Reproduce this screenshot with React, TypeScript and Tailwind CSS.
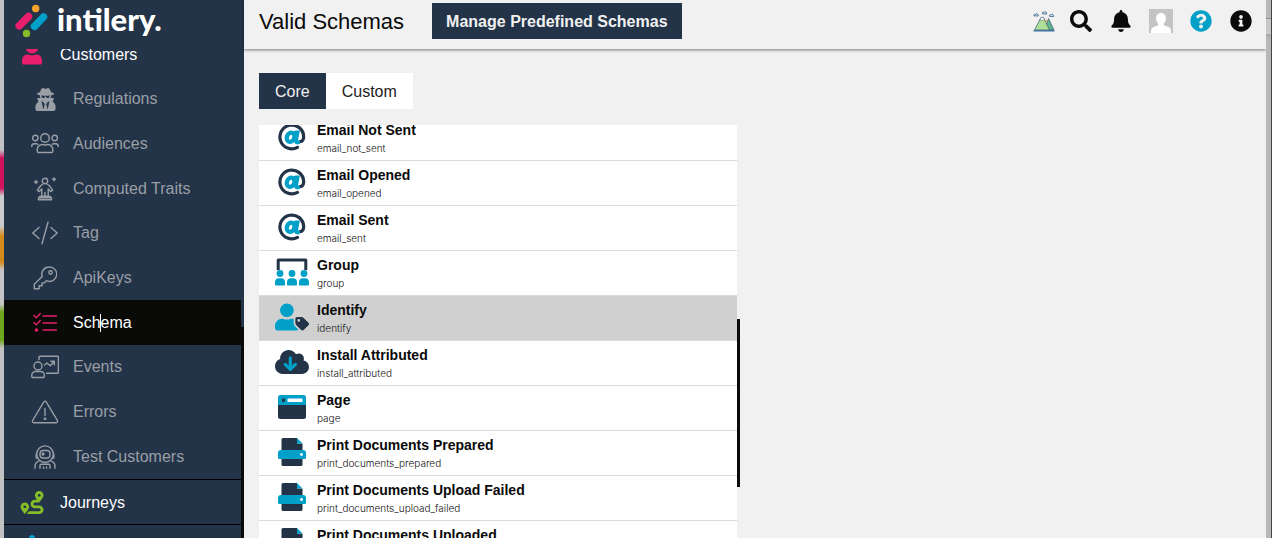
import type { ReactNode } from "react";
import {
  FaBell,
  FaInfoCircle,
  FaQuestionCircle,
  FaRoute,
  FaSearch,
  FaUserSecret,
} from "react-icons/fa";

function LineIcon({
  children,
  wide,
}: {
  children: ReactNode;
  wide?: boolean;
}) {
  return (
    <svg
      viewBox={wide ? "0 0 28 24" : "0 0 24 24"}
      className={wide ? "w-7 h-6" : "w-6 h-6"}
      fill="none"
      stroke="currentColor"
      strokeWidth={1.4}
      strokeLinecap="round"
      strokeLinejoin="round"
    >
      {children}
    </svg>
  );
}

const navIcons = {
  audiences: (
    <LineIcon wide>
      <circle cx="14" cy="6" r="4.3" />
      <circle cx="4.3" cy="6" r="2.7" />
      <circle cx="23.7" cy="6" r="2.7" />
      <path d="M6.200 19.300v-1.800a5 5 0 0 1 5-5c1 0 1.600.5 2.800.5s1.800-.5 2.800-.5a5 5 0 0 1 5 5v1.800a1.200 1.200 0 0 1-1.200 1.200H7.400a1.200 1.200 0 0 1-1.200-1.200z" />
      <path d="M.7 14.500c0-1.600 1.200-2.700 2.700-2.700h1.800c.6 0 1.200.2 1.600.5M27.300 14.500c0-1.600-1.200-2.700-2.700-2.700h-1.800c-.6 0-1.200.2-1.600.5" />
    </LineIcon>
  ),
  traits: (
    <LineIcon>
      <circle cx="12" cy="4" r="2.700" />
      <path d="M9.500 7.500 7.800 8.500 4.400 13.200l1.800 1.400 2.600-2.700v7.400h6.400v-7.400l2.600 2.700 1.800-1.400-3.400-4.700-1.700-1M12 15.500v3.800M6.500 19.500h11v1.300h-11zM5.500 22.800v-2h13v2zM3 3.500v3M1.500 5h3M21 .8v3M19.500 2.300h3" />
    </LineIcon>
  ),
  tag: (
    <LineIcon wide>
      <path d="M8 6.500 1.800 12 8 17.500M20 6.500l6.200 5.500-6.200 5.500M17 1.200 11 22.800" />
    </LineIcon>
  ),
  key: (
    <LineIcon>
      <circle cx="17.500" cy="6.500" r="1.700" />
      <path d="M16 1a7.200 7.200 0 0 0-6.800 9.500L1.300 18.300v4.400h4.900v-2.900h2.900v-2.900h2.400l2-2.200A7.200 7.200 0 1 0 16 1z" />
    </LineIcon>
  ),
  schema: (
    <LineIcon>
      <path d="m1 4.500 2.300 2.300L7.300 2.500M1 11.500l2.300 2.300 4-4.300M10 5h13.500M10 12h13.500M10 19h13.500" />
      <circle cx="3.500" cy="19" r="1" fill="currentColor" />
    </LineIcon>
  ),
  events: (
    <LineIcon wide>
      <path d="M8 4.500V2.300a1 1 0 0 1 1-1h17.400a1 1 0 0 1 1 1v15a1 1 0 0 1-1 1H15.500M13.500 10l2.500-2 3.300 2.800 4-4.500M19.800 6.300h3.500v3.600" />
      <circle cx="7" cy="11" r="4" />
      <path d="M.8 21.500v-1.200c0-2.200 1.800-3.800 3.900-3.800h4.800c2.100 0 3.900 1.600 3.900 3.800v1.200a1 1 0 0 1-1 1H1.800a1 1 0 0 1-1-1z" />
    </LineIcon>
  ),
  errors: (
    <LineIcon wide>
      <path d="M12.800 1.800 1.600 20.500c-.6 1 .1 2.200 1.200 2.200h22.400c1.100 0 1.800-1.200 1.200-2.200L15.200 1.800c-.5-.9-1.900-.9-2.400 0zM14 8.500v7" />
      <circle cx="14" cy="18.800" r=".7" fill="currentColor" />
    </LineIcon>
  ),
  testers: (
    <LineIcon>
      <path d="M3.500 9h-.3v4h1.200M20.500 9h.3v4h-1.200" />
      <circle cx="12" cy="9.200" r="8.300" />
      <rect x="7" y="5.500" width="10" height="7.500" rx="3" />
      <path d="M10 7.800v2.400M8.800 9h2.400M2 23.300v-1.800c0-2.700 1.600-4.600 3.800-5.300M22 23.300v-1.800c0-2.700-1.600-4.600-3.800-5.300M7 23.300v-2.800c0-.7.500-1.200 1.200-1.200h7.600c.7 0 1.200.5 1.200 1.200v2.800M10.500 22v1.300M13.500 22v1.300" />
    </LineIcon>
  ),
};

const links = [
  { name: "Regulations", icon: <FaUserSecret size={23} /> },
  { name: "Audiences", icon: navIcons.audiences },
  { name: "Computed Traits", icon: navIcons.traits },
  { name: "Tag", icon: navIcons.tag },
  { name: "ApiKeys", icon: navIcons.key },
  { name: "Schema", icon: navIcons.schema, active: true },
  { name: "Events", icon: navIcons.events },
  { name: "Errors", icon: navIcons.errors },
  { name: "Test Customers", icon: navIcons.testers },
];

function AtIcon() {
  return (
    <svg viewBox="0 0 28 28" className="w-7 h-7" fill="none">
      <path
        d="M19.500 24.400A11.900 11.900 0 1 1 25.700 13.500c0 3.300-1.500 5-3.700 5.100"
        stroke="#233348"
        strokeWidth="3.200"
        strokeLinecap="round"
      />
      <path
        d="M17.500 9.300h2.200l-1.700 8.800c-.2 1.200.6 1.600 2.400 1.300"
        stroke="#00a0c8"
        strokeWidth="3.600"
        strokeLinecap="round"
      />
      <ellipse
        cx="12.600"
        cy="14.300"
        rx="3.700"
        ry="4.700"
        transform="rotate(24 12.600 14.300)"
        stroke="#00a0c8"
        strokeWidth="4.300"
      />
    </svg>
  );
}

function GroupIcon() {
  return (
    <svg viewBox="0 0 34 28" className="w-[34px] h-7">
      <path d="M3.200 12V2h27.600v10" fill="none" stroke="#233348" strokeWidth="3" strokeLinejoin="round" />
      <g fill="#00a0c8">
        <circle cx="5" cy="15.500" r="3.400" />
        <circle cx="17" cy="15.500" r="3.400" />
        <circle cx="29" cy="15.500" r="3.400" />
        <path d="M0 26.500v-2.200a4 4 0 0 1 4-4h2a4 4 0 0 1 4 4v2.200a.9.900 0 0 1-.9.900H.9a.9.900 0 0 1-.9-.9zM12 26.500v-2.200a4 4 0 0 1 4-4h2a4 4 0 0 1 4 4v2.200a.9.900 0 0 1-.9.900h-8.200a.9.900 0 0 1-.9-.9zM24 26.500v-2.200a4 4 0 0 1 4-4h2a4 4 0 0 1 4 4v2.200a.9.900 0 0 1-.9.900h-8.200a.9.900 0 0 1-.9-.9z" />
      </g>
    </svg>
  );
}

function IdentifyIcon() {
  return (
    <svg viewBox="0 0 640 512" className="w-[34px] h-7">
      <path
        d="M224 256c70.700 0 128-57.300 128-128S294.700 0 224 0 96 57.300 96 128s57.300 128 128 128zm127.800 111.200V294c-12.200-3.600-24.900-6.200-38.200-6.200h-16.700c-22.200 10.200-46.900 16-72.900 16s-50.600-5.800-72.900-16h-16.700C60.200 287.900 0 348.100 0 422.300v41.600c0 26.500 21.500 48 48 48h352c15.500 0 29.100-7.500 37.900-18.900l-58-58c-18.100-18.100-28.100-42.200-28.100-67.800z"
        fill="#00a0c8"
      />
      <path
        d="M630.600 364.900l-90.300-90.200c-12-12-28.300-18.700-45.300-18.700h-79.300c-17.700 0-32 14.300-32 32v79.200c0 17 6.700 33.200 18.700 45.200l90.300 90.200c12.500 12.500 32.800 12.500 45.300 0l92.500-92.500c12.600-12.500 12.600-32.700.1-45.200zm-182.800-21c-13.300 0-24-10.700-24-24s10.700-24 24-24 24 10.700 24 24c0 13.200-10.700 24-24 24z"
        fill="#233348"
      />
    </svg>
  );
}

function CloudIcon() {
  return (
    <svg viewBox="0 0 640 512" className="w-[34px] h-7">
      <path
        d="M537.600 226.600c4.100-10.700 6.400-22.400 6.400-34.600 0-53-43-96-96-96-19.700 0-38.100 6-53.300 16.200C367 64.200 315.300 32 256 32c-88.400 0-160 71.600-160 160 0 2.700.1 5.400.2 8.100C40.200 219.800 0 273.200 0 336c0 79.500 64.500 144 144 144h368c70.700 0 128-57.300 128-128 0-61.900-44-113.600-102.400-125.400z"
        fill="#233348"
      />
      <path
        d="M288 178v208M192 300l96 96 96-96"
        fill="none"
        stroke="#00a0c8"
        strokeWidth="60"
        strokeLinecap="round"
        strokeLinejoin="round"
      />
    </svg>
  );
}

function PageIcon() {
  return (
    <svg viewBox="0 0 28 24" className="w-7 h-6">
      <path d="M0 10h28v11.500a2.500 2.500 0 0 1-2.500 2.500h-23A2.500 2.500 0 0 1 0 21.500z" fill="#233348" />
      <path d="M2.500 0h23A2.500 2.500 0 0 1 28 2.500V10H0V2.500A2.500 2.500 0 0 1 2.500 0z" fill="#00a0c8" />
      <rect x="4" y="3.500" width="3" height="3.500" rx=".5" fill="#233348" />
      <rect x="9.500" y="3.500" width="15" height="3.500" rx=".5" fill="#fff" />
    </svg>
  );
}

function PrintIcon() {
  return (
    <svg viewBox="0 0 28 28" className="w-7 h-7">
      <path d="M3.500 12.500V1.500A1.500 1.500 0 0 1 5 0h14v5.500h5.500v7z" fill="#233348" />
      <path d="M19 0l5.500 5.500H19z" fill="#00a0c8" />
      <path d="M3.500 20h21v6.500A1.500 1.500 0 0 1 23 28H5a1.500 1.500 0 0 1-1.500-1.500z" fill="#233348" />
      <path d="M3 12h22a3 3 0 0 1 3 3v5a1 1 0 0 1-1 1H1a1 1 0 0 1-1-1v-5a3 3 0 0 1 3-3z" fill="#00a0c8" />
      <circle cx="23.500" cy="16.500" r="1.400" fill="#fff" />
    </svg>
  );
}

const schemas = [
  { title: "Email Not Sent", key: "email_not_sent", icon: <AtIcon /> },
  { title: "Email Opened", key: "email_opened", icon: <AtIcon /> },
  { title: "Email Sent", key: "email_sent", icon: <AtIcon /> },
  { title: "Group", key: "group", icon: <GroupIcon /> },
  { title: "Identify", key: "identify", icon: <IdentifyIcon />, selected: true },
  { title: "Install Attributed", key: "install_attributed", icon: <CloudIcon /> },
  { title: "Page", key: "page", icon: <PageIcon /> },
  { title: "Print Documents Prepared", key: "print_documents_prepared", icon: <PrintIcon /> },
  { title: "Print Documents Upload Failed", key: "print_documents_upload_failed", icon: <PrintIcon /> },
  { title: "Print Documents Uploaded", key: "print_documents_uploaded", icon: <PrintIcon /> },
];

function Logo() {
  return (
    <a href="#" className="flex items-center gap-2 pl-[11px] pb-[7px] h-[49px] shrink-0 text-white">
      <svg viewBox="0 0 34 34" className="w-[34px] h-[34px]" strokeLinecap="round" strokeWidth="7.500">
        <path d="M4.200 21.800 13.500 12.500" stroke="#e91e6c" />
        <path d="M19.500 22.300 28.500 13" stroke="#00a0c8" />
        <circle cx="20.700" cy="4.500" r="3.700" fill="#f9a12b" />
        <circle cx="11.500" cy="29.500" r="3.700" fill="#84bd27" />
      </svg>
      <span className="font-[Lato,sans-serif] font-black text-[31px] leading-10 pb-1">intilery.</span>
    </a>
  );
}

function Sidebar() {
  return (
    <aside className="w-60 shrink-0 flex flex-col h-full bg-[#233348] text-base">
      <Logo />
      <div className="flex flex-1 min-h-0">
        <nav className="flex-1 overflow-hidden">
          <a href="#" className="-mt-4 flex items-center h-[43px] pl-4 text-white">
            <span className="w-6 flex justify-center mr-4 pb-1">
              <svg viewBox="0 0 20 24" className="w-5 h-6" fill="#e91e6c">
                <circle cx="10" cy="6" r="6.500" />
                <path d="M0 22v-2.500c0-3.600 2.500-6 5.500-6 1.500 0 2.500 1 4.500 1s3-1 4.500-1c3 0 5.500 2.400 5.500 6V22a1.500 1.500 0 0 1-1.500 1.500h-17A1.500 1.500 0 0 1 0 22z" />
              </svg>
            </span>
            Customers
          </a>
          <ul className="flex flex-col h-[403px] pt-px">
            {links.map((link) => (
              <li key={link.name} className="flex-1 flex">
                <a
                  href="#"
                  className={`flex-1 flex items-center pl-[26px] ${
                    link.active ? "bg-[#0a0a09] text-white" : "text-[#9a9fa6]"
                  }`}
                >
                  <span
                    className={`w-[30px] mr-[13px] flex justify-center ${
                      link.active ? "text-[#e91e6c]" : ""
                    }`}
                  >
                    {link.icon}
                  </span>
                  <span className="relative">
                    {link.name}
                    {link.active && (
                      <span className="absolute left-[27px] top-[3px] w-px h-[18px] bg-white" />
                    )}
                  </span>
                </a>
              </li>
            ))}
          </ul>
          <a href="#" className="flex items-center h-[45px] pt-0.5 pl-4 border-t border-black text-white">
            <FaRoute size={23} color="#84bd27" className="mr-4 mb-0.5 w-6" />
            Journeys
          </a>
          <div className="border-t border-black pt-[10px] pl-[21px]">
            <svg viewBox="0 0 20 20" className="w-5 h-5" fill="#00a0c8">
              <circle cx="7" cy="3" r="3" />
              <rect x="4" y="8" width="6" height="12" rx="2" />
            </svg>
          </div>
        </nav>
        <div className="w-[3px] pt-[278px] flex">
          <div className="flex-1 bg-[#0a0a09]" />
        </div>
      </div>
    </aside>
  );
}

function Mountain() {
  return (
    <svg viewBox="0 0 22 22" className="w-[22px] h-[22px]" strokeLinejoin="round">
      <path d="M11.500 20 15.500 8.500 21 20z" fill="#5cb58c" stroke="#3b5573" strokeWidth=".7" />
      <path d="M1.500 20 8 7.500h2.500L16.500 20z" fill="#aee09a" stroke="#3b5573" strokeWidth=".7" />
      <path d="M6.500 10.500 8 7.300h2.500l1.500 3.200-1.600-.8-1.300 1-1.200-1z" fill="#fff" stroke="#3b5573" strokeWidth=".5" />
      <path d="m12 10.500 1.500-1 .8 3z" fill="#f9a12b" />
      <path d="M.5 20.800h21" stroke="#3b6ea5" strokeWidth="1.400" />
      <g fill="#d5ecf9" stroke="#41658f" strokeWidth=".9">
        <path d="M1 5.800c-.6-1.500 1-2 1.500-1.300.6-1.400 2.400-.8 2.300.5 1 .2.800 1 .2 1z" />
        <path d="M9.500 3.800c-.6-1.500 1-2 1.500-1.300.6-1.400 2.400-.8 2.300.5 1 .2.800 1 .2 1z" />
        <path d="M16.500 6.300c-.6-1.500 1-2 1.500-1.300.6-1.400 2.400-.8 2.300.5 1 .2.800 1 .2 1z" />
      </g>
    </svg>
  );
}

function Header() {
  const action = "w-10 h-10 flex items-center justify-center";

  return (
    <header className="flex items-center h-[49px] shrink-0 pl-[15px] pr-[5px] pb-[7px] shadow-[0_1px_3px_rgba(0,0,0,0.5)]">
      <h1 className="text-[22px] leading-7 mr-7 pt-0.5">Valid Schemas</h1>
      <button className="h-9 px-3.5 pt-0.5 bg-[#233348] text-[#f1f1f1] font-bold text-base">
        Manage Predefined Schemas
      </button>
      <div className="ml-auto flex items-center">
        <button aria-label="Workspace" className="w-[34px] h-10 flex items-center justify-center">
          <Mountain />
        </button>
        <button aria-label="Search" className={action}>
          <FaSearch size={22} />
        </button>
        <button aria-label="Notifications" className={action}>
          <FaBell size={22} />
        </button>
        <button aria-label="Account" className={action}>
          <svg viewBox="0 0 24 24" className="w-6 h-6">
            <path d="M0 0h24v24H0z" fill="#c4c4c4" />
            <path
              d="M12 4c-3 0-4.900 2.200-4.900 5.200 0 2.200.8 4.200 2.100 5.300v1.700L4 18.300c-1.200.6-1.700 1.500-1.900 3V24h19.800v-2.700c-.2-1.500-.7-2.400-1.900-3l-5.200-2.100v-1.700c1.300-1.100 2.100-3.100 2.100-5.300C16.900 6.200 15 4 12 4z"
              fill="#fff"
            />
          </svg>
        </button>
        <button aria-label="Help" className={action}>
          <FaQuestionCircle size={22} color="#00a0c8" />
        </button>
        <button aria-label="Info" className={action}>
          <FaInfoCircle size={22} />
        </button>
      </div>
    </header>
  );
}

export default function App() {
  return (
    <div className="flex h-screen overflow-hidden bg-[#f1f1f1] text-[#0a0a0a] font-['Liberation_Sans',Arial,sans-serif]">
      <div className="w-1 shrink-0 bg-[linear-gradient(#c2c2c2_150px,#d0125f_158px,#d0125f_188px,#cbcbcb_196px,#cbcbcb_226px,#d58a1c_236px,#d58a1c_262px,#c6c6c6_270px,#c6c6c6_304px,#6da51c_312px,#6da51c_340px,#c2c2c2_348px)]" />
      <Sidebar />
      <div className="flex-1 min-w-0 flex flex-col">
        <Header />
        <main className="flex-1 min-h-0 flex flex-col pt-6 pl-[15px]">
          <div role="tablist" className="flex text-base mb-4">
            <button role="tab" aria-selected="true" className="h-9 px-4 pt-0.5 bg-[#233348] text-[#f1f1f1]">
              Core
            </button>
            <button role="tab" aria-selected="false" className="h-9 px-4 pt-0.5 bg-white text-[#222]">
              Custom
            </button>
          </div>
          <div className="flex-1 min-h-0 flex w-full max-w-[481px]">
            <div className="flex-1 overflow-hidden">
              <ul className="-mt-[9px] bg-white">
                {schemas.map((schema) => (
                  <li key={schema.key} className="border-b border-[#dcdcdc]">
                    <button
                      className={`w-full h-11 flex items-center text-left pl-4 ${
                        schema.selected ? "bg-[#d0d0d0]" : ""
                      }`}
                    >
                      <span className="w-[34px] mr-2 pb-0.5 flex justify-center">{schema.icon}</span>
                      <span className="flex flex-col">
                        <span className="font-bold text-sm leading-5">{schema.title}</span>
                        <span className="font-[Inter,sans-serif] font-light text-[10px] leading-4 text-[#111]">
                          {schema.key}
                        </span>
                      </span>
                    </button>
                  </li>
                ))}
              </ul>
            </div>
            <div className="w-[3px] pt-[194px]">
              <div className="h-[168px] bg-[#0a0a0a]" />
            </div>
          </div>
        </main>
      </div>
      <div className="w-[6px] shrink-0 border-r border-[#444] bg-[linear-gradient(#b8b8b8_18px,#909090_18px,#909090_19px,#c8c8c8_19px,#c8c8c8_34px,#a8a8a8_34px,#b8b8b8_40px)]" />
    </div>
  );
}
